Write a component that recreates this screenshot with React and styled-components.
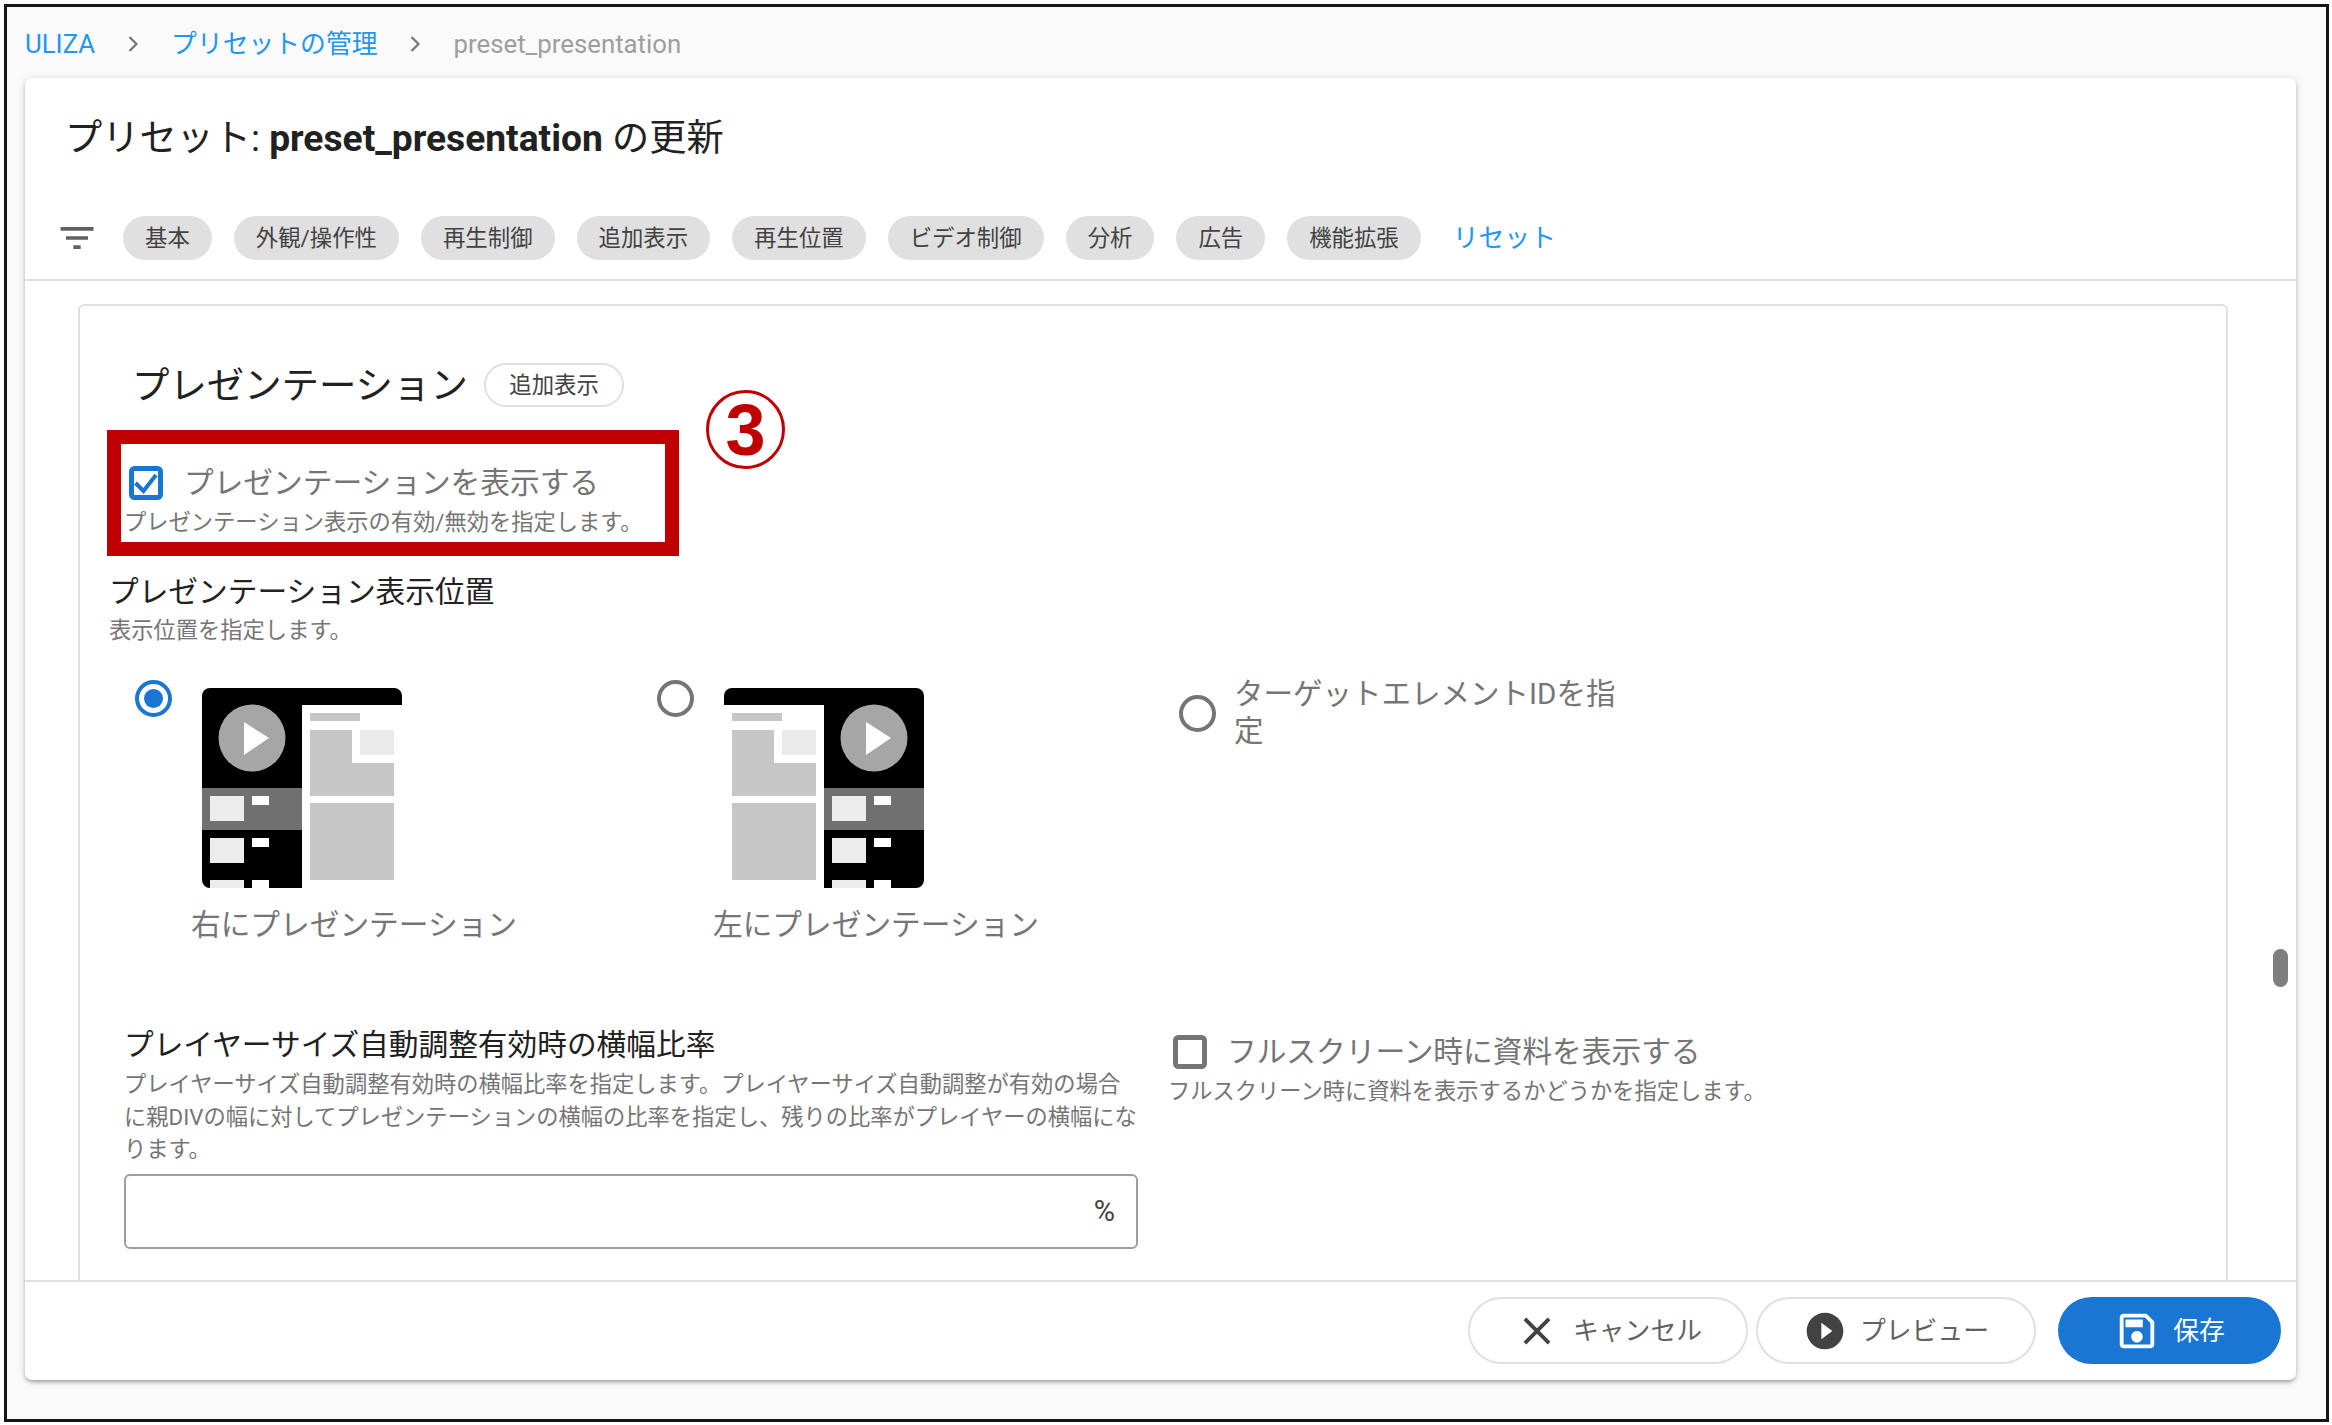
import React from "react";
import styled, { createGlobalStyle } from "styled-components";

const Global = createGlobalStyle`
  html, body { margin: 0; padding: 0; background: #fff; }
  body { font-family: Roboto, "Noto Sans CJK JP", sans-serif; }
  * { box-sizing: border-box; }
`;

const Frame = styled.div`
  position: relative;
  width: 2325px;
  height: 1418px;
  margin: 4px 3px 3px 4px;
  border: 3px solid #151515;
  background: #fafafa;
  display: flex;
  flex-direction: column;
  overflow: hidden;
`;
const Breadcrumb = styled.nav`
  height: 71px;
  flex: none;
  display: flex;
  align-items: center;
  padding: 3px 0 0 18px;
  font-size: 25.8px;
  color: #9e9e9e;
`;
const CrumbLink = styled.span`
  color: #2196f3;
  padding-bottom: ${p => p.$cjk ? 5 : 0}px;
`;
const CrumbSep = styled.svg`
  width: 10px;
  height: 16px;
  margin: 0 33px;
  fill: none;
  stroke: #757575;
  stroke-width: 2.2;
`;
const Card = styled.main`
  position: relative;
  flex: 1;
  min-height: 0;
  margin: 0 30px 39px 18px;
  background: #fff;
  border-radius: 7px;
  box-shadow: 0 3px 4px -2px rgba(0,0,0,.3), 0 2px 5px rgba(0,0,0,.14), 0 1px 10px rgba(0,0,0,.1);
  display: flex;
  flex-direction: column;
  overflow: hidden;
`;
const Header = styled.header`
  flex: none;
  padding: 35px 0 19px 30px;
  border-bottom: 2px solid #e0e0e0;
`;
const Title = styled.h1`
  margin: 0 0 53px 10px;
  font-size: 37.2px;
  line-height: 50px;
  font-weight: 400;
  color: #212121;
  b { font-weight: 700; }
`;
const ChipRow = styled.div`
  display: flex;
  align-items: center;
  gap: 22px;
`;
const Icon = styled.svg`
  flex: none;
  width: ${p => p.$size}px;
  height: ${p => p.$size}px;
  fill: ${p => p.$color || "#424242"};
`;
const FilterIcon = styled(Icon)`
  margin-right: 2px;
`;
const Chip = styled.span`
  height: 44px;
  display: flex;
  align-items: center;
  padding: 0 22px 5px;
  border-radius: 22px;
  background: #e0e0e0;
  color: #424242;
  font-size: 22.4px;
`;
const ResetLink = styled.a`
  margin-left: 10px;
  padding-bottom: 5px;
  font-size: 25.8px;
  color: #2196f3;
`;
const Body = styled.section`
  flex: 1;
  min-height: 0;
  overflow: hidden;
  padding: 23px 68px 0 53px;
`;
const Panel = styled.div`
  border: 2px solid #e0e0e0;
  border-radius: 6px;
  padding: 57px 30px 40px 29px;
`;
const SectionHead = styled.div`
  display: flex;
  align-items: center;
  gap: 16px;
  margin-left: 23px;
  height: 44px;
`;
const SectionTitle = styled.h2`
  margin: 0;
  padding-bottom: 5px;
  font-size: 37.4px;
  font-weight: 400;
  color: #212121;
`;
const TagChip = styled.span`
  height: 44px;
  display: flex;
  align-items: center;
  padding: 0 23.5px 5px;
  border: 2px solid #e0e0e0;
  border-radius: 22px;
  font-size: 22.4px;
  color: #424242;
`;
const CheckRow = styled.label`
  display: flex;
  align-items: center;
  gap: ${p => p.$gap}px;
  height: 34px;
  margin-left: ${p => p.$indent}px;
  margin-top: ${p => p.$top}px;
`;
const CheckLabel = styled.span`
  padding-bottom: 6px;
  font-size: 29.7px;
  color: #757575;
  white-space: nowrap;
`;
const Hint = styled.p`
  margin: ${p => p.$top || 0}px 0 0 ${p => p.$indent || 0}px;
  font-size: 22.27px;
  line-height: 32.5px;
  color: #757575;
`;
const FieldTitle = styled.h3`
  margin: ${p => p.$top}px 0 0;
  font-size: 29.7px;
  line-height: 44px;
  font-weight: 400;
  color: #212121;
  white-space: nowrap;
`;
const RadioGrid = styled.div`
  display: grid;
  grid-template-columns: 522px 522px 460px;
  margin: 34px 0 0 26px;
`;
const RadioCell = styled.div`
  display: flex;
  align-items: flex-start;
  gap: 30px;
`;
const RadioText = styled.div`
  width: 390px;
  margin: -4px 0 0 -12px;
  font-size: 29.5px;
  line-height: 37px;
  color: #757575;
`;
const RadioCircle = styled.span`
  flex: none;
  width: 37px;
  height: 37px;
  margin-top: ${p => p.$top || 0}px;
  border: 4px solid ${p => p.$on ? "#1976d2" : "#757575"};
  border-radius: 50%;
  display: flex;
  align-items: center;
  justify-content: center;
  &::after {
    content: "";
    display: ${p => p.$on ? "block" : "none"};
    width: 19px;
    height: 19px;
    border-radius: 50%;
    background: #1976d2;
  }
`;
const Layout = styled.div`
  margin-top: 8px;
  display: flex;
  flex-direction: column;
  align-items: flex-start;
`;
const LayoutLabel = styled.span`
  margin: 15px 0 0 -11px;
  font-size: 29.7px;
  line-height: 44px;
  color: #757575;
  white-space: nowrap;
`;
const LowerGrid = styled.div`
  display: grid;
  grid-template-columns: 1014px 720px;
  column-gap: 30px;
  margin: 76px 0 0 15px;
`;
const Field = styled.div`
  display: block;
`;
const InputBox = styled.div`
  margin-top: 8px;
  height: 75px;
  border: 2px solid #9e9e9e;
  border-radius: 6px;
  display: flex;
  align-items: center;
  justify-content: flex-end;
  padding-right: 21px;
  font-size: 29px;
  color: #424242;
`;
const Footer = styled.footer`
  flex: none;
  height: 100px;
  border-top: 2px solid #e0e0e0;
  padding: 15px 15px 0 0;
  display: flex;
  justify-content: flex-end;
  align-items: flex-start;
`;
const Btn = styled.button`
  width: ${p => p.$w}px;
  height: 67px;
  margin-left: ${p => p.$gap}px;
  border: ${p => p.$primary ? "none" : "2px solid #e0e0e0"};
  border-radius: 34px;
  background: ${p => p.$primary ? "#1976d2" : "#fff"};
  color: ${p => p.$primary ? "#fff" : "#616161"};
  font: 400 25.8px Roboto, "Noto Sans CJK JP", sans-serif;
  display: flex;
  align-items: center;
  justify-content: center;
  gap: 13px;
`;
const BtnLabel = styled.span`
  padding-bottom: 4px;
`;
const Scrollbar = styled.div`
  position: absolute;
  right: 8px;
  top: 871px;
  width: 15px;
  height: 38px;
  border-radius: 8px;
  background: #7f7f7f;
`;
const RedBox = styled.div`
  position: absolute;
  left: 100px;
  top: 423px;
  width: 572px;
  height: 126px;
  border: 14px solid #c00000;
  pointer-events: none;
`;
const Badge = styled.div`
  position: absolute;
  left: 699px;
  top: 383px;
  width: 79px;
  height: 79px;
  border: 3px solid #c00000;
  border-radius: 50%;
  display: flex;
  align-items: center;
  justify-content: center;
  font: 700 72px "Liberation Sans", Arial, sans-serif;
  color: #c00000;
`;

const CheckSvg = styled.svg`
  flex: none;
  width: 34px;
  height: 34px;
`;
const CheckBoxIcon = ({ checked }) => (
  <CheckSvg viewBox="0 0 34 34">
    <rect x="2.5" y="2.5" width="29" height="29" rx="3" fill="#fff" stroke={checked ? "#1976d2" : "#757575"} strokeWidth="5" />
    {checked && <path d="M6.5 17 L14.5 25 L27 9" fill="none" stroke="#1976d2" strokeWidth="4" />}
  </CheckSvg>
);

const LayoutPicture = ({ flip }) => {
  const col = flip ? 100 : 0;
  const side = flip ? 0 : 100;
  return (
    <svg width="200" height="200" viewBox="0 0 200 200">
      <path d={flip
        ? "M100 0H192a8 8 0 0 1 8 8V192a8 8 0 0 1-8 8H100Z"
        : "M8 0H100V200H8a8 8 0 0 1-8-8V8a8 8 0 0 1 8-8Z"} fill="#000" />
      <path d={flip
        ? "M0 17V8a8 8 0 0 1 8-8H100V17Z"
        : "M100 0H192a8 8 0 0 1 8 8V17H100Z"} fill="#000" />
      <g transform={`translate(${col} 0)`}>
        <circle cx="50" cy="50" r="33.5" fill="#a6a6a6" />
        <path d="M42 34L67 50L42 67Z" fill="#fff" />
        <rect y="100" width="100" height="42" fill="#707070" />
        <rect x="8" y="108" width="34" height="25" fill="#ececec" />
        <rect x="50" y="108" width="17" height="9" fill="#fff" />
        <rect x="8" y="150" width="34" height="25" fill="#ececec" />
        <rect x="50" y="150" width="17" height="9" fill="#fff" />
        <rect x="8" y="192" width="34" height="8" fill="#ececec" />
        <rect x="50" y="192" width="17" height="8" fill="#fff" />
      </g>
      <g transform={`translate(${side} 0)`}>
        <rect x="8" y="25" width="50" height="8" fill="#c6c6c6" />
        <path d="M8 42H50V75H92V108H8Z" fill="#c6c6c6" />
        <rect x="58" y="42" width="34" height="25" fill="#ebebeb" />
        <rect x="8" y="115" width="84" height="77" fill="#c6c6c6" />
      </g>
    </svg>
  );
};

const chips = ["基本", "外観/操作性", "再生制御", "追加表示", "再生位置", "ビデオ制御", "分析", "広告", "機能拡張"];

export default function App() {
  return (
    <>
      <Global />
      <Frame>
        <Breadcrumb>
          <CrumbLink>ULIZA</CrumbLink>
          <CrumbSep viewBox="0 0 10 16"><path d="M1.5 1 L8.5 8 L1.5 15" /></CrumbSep>
          <CrumbLink $cjk>プリセットの管理</CrumbLink>
          <CrumbSep viewBox="0 0 10 16"><path d="M1.5 1 L8.5 8 L1.5 15" /></CrumbSep>
          <span>preset_presentation</span>
        </Breadcrumb>
        <Card>
          <Header>
            <Title>プリセット: <b>preset_presentation</b> の更新</Title>
            <ChipRow>
              <FilterIcon $size={44} $color="#616161" viewBox="0 0 24 24"><path d="M10 18h4v-2h-4v2zM3 6v2h18V6H3zm3 7h12v-2H6v2z" /></FilterIcon>
              {chips.map(c => <Chip key={c}>{c}</Chip>)}
              <ResetLink>リセット</ResetLink>
            </ChipRow>
          </Header>
          <Body>
            <Panel>
              <SectionHead>
                <SectionTitle>プレゼンテーション</SectionTitle>
                <TagChip>追加表示</TagChip>
              </SectionHead>
              <CheckRow $indent={20} $top={59} $gap={21}>
                <CheckBoxIcon checked />
                <CheckLabel>プレゼンテーションを表示する</CheckLabel>
              </CheckRow>
              <Hint $indent={15} $top={6}>プレゼンテーション表示の有効/無効を指定します。</Hint>
              <FieldTitle $top={31}>プレゼンテーション表示位置</FieldTitle>
              <Hint>表示位置を指定します。</Hint>
              <RadioGrid>
                <RadioCell>
                  <RadioCircle $on />
                  <Layout>
                    <LayoutPicture />
                    <LayoutLabel>右にプレゼンテーション</LayoutLabel>
                  </Layout>
                </RadioCell>
                <RadioCell>
                  <RadioCircle />
                  <Layout>
                    <LayoutPicture flip />
                    <LayoutLabel>左にプレゼンテーション</LayoutLabel>
                  </Layout>
                </RadioCell>
                <RadioCell>
                  <RadioCircle $top={15} />
                  <RadioText>ターゲットエレメントIDを指定</RadioText>
                </RadioCell>
              </RadioGrid>
              <LowerGrid>
                <Field>
                  <FieldTitle $top={0}>プレイヤーサイズ自動調整有効時の横幅比率</FieldTitle>
                  <Hint $top={1}>プレイヤーサイズ自動調整有効時の横幅比率を指定します。プレイヤーサイズ自動調整が有効の場合に親DIVの幅に対してプレゼンテーションの横幅の比率を指定し、残りの比率がプレイヤーの横幅になります。</Hint>
                  <InputBox>%</InputBox>
                </Field>
                <Field>
                  <CheckRow $indent={5} $top={12} $gap={20}>
                    <CheckBoxIcon />
                    <CheckLabel>フルスクリーン時に資料を表示する</CheckLabel>
                  </CheckRow>
                  <Hint $top={6}>フルスクリーン時に資料を表示するかどうかを指定します。</Hint>
                </Field>
              </LowerGrid>
            </Panel>
          </Body>
          <Footer>
            <Btn $w={280} $gap={0}>
              <Icon $size={46} viewBox="0 0 24 24"><path d="M19 6.41 17.59 5 12 10.59 6.41 5 5 6.41 10.59 12 5 17.59 6.41 19 12 13.41 17.59 19 19 17.59 13.41 12z" /></Icon>
              <BtnLabel>キャンセル</BtnLabel>
            </Btn>
            <Btn $w={280} $gap={8}>
              <Icon $size={44} viewBox="0 0 24 24"><path d="M12 2C6.48 2 2 6.48 2 12s4.48 10 10 10 10-4.48 10-10S17.52 2 12 2zm-2 14.5v-9l6 4.5-6 4.5z" /></Icon>
              <BtnLabel>プレビュー</BtnLabel>
            </Btn>
            <Btn $w={223} $gap={22} $primary>
              <Icon $size={46} $color="#fff" viewBox="0 0 24 24"><path d="M17 3H5c-1.11 0-2 .9-2 2v14c0 1.1.89 2 2 2h14c1.1 0 2-.9 2-2V7l-4-4zm2 16H5V5h11.17L19 7.83V19zm-7-7c-1.66 0-3 1.34-3 3s1.34 3 3 3 3-1.34 3-3-1.34-3-3-3zM6 6h9v4H6z" /></Icon>
              <BtnLabel>保存</BtnLabel>
            </Btn>
          </Footer>
          <Scrollbar />
        </Card>
        <RedBox />
        <Badge>3</Badge>
      </Frame>
    </>
  );
}
